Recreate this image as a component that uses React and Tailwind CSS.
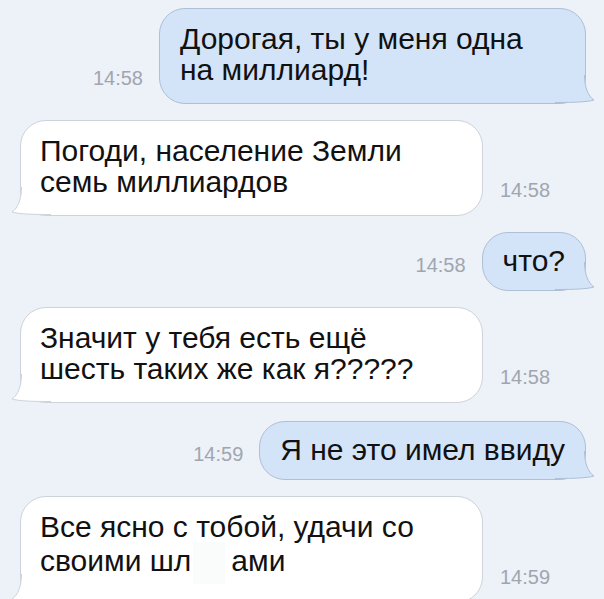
import React from 'react';

const messages = [
  { out: true, time: '14:58', width: 'w-[427px]', lines: ['Дорогая, ты у меня одна', 'на миллиард!'] },
  { out: false, time: '14:58', lines: ['Погоди, население Земли', 'семь миллиардов'] },
  { out: true, time: '14:58', lines: ['что?'] },
  { out: false, time: '14:58', lines: ['Значит у тебя есть ещё', 'шесть таких же как я?????'] },
  { out: true, time: '14:59', gap: 'mt-[2px]', lines: ['Я не это имел ввиду'] },
  { out: false, time: '14:59', lines: ['Все ясно с тобой, удачи со', 'CENSORED'] },
];

function Tail({ out }) {
  const fill = out ? '#d4e4f8' : '#ffffff';
  const stroke = out ? '#aebfd6' : '#cdd3db';
  return (
    <svg
      width="40"
      height="32"
      viewBox="0 0 40 32"
      className={
        out
          ? 'absolute bottom-0 right-[-10px] z-0'
          : 'absolute bottom-0 left-[-10px] z-0 -scale-x-100'
      }
    >
      <path d="M29.5 4 C29.5 16 33 25 39 29 C32 31 20 31.5 0 31.5 L0 4 Z" fill={fill} />
      <path d="M29.5 4 C29.5 16 33 25 39 29 C32 31 20 31.5 0 31.5" fill="none" stroke={stroke} strokeWidth="1" />
    </svg>
  );
}

function Line({ text }) {
  if (text === 'CENSORED') {
    return (
      <div className="whitespace-nowrap">
        своими шл<span className="inline-block w-[32px] h-[42px] align-middle bg-[#fafbfb] ml-[2px] mr-[6px]" />ами
      </div>
    );
  }
  return <div className="whitespace-nowrap">{text}</div>;
}

function Bubble({ msg }) {
  const single = msg.lines.length === 1;
  const pad = single ? 'pt-[12px] pb-[14px]' : 'pt-[14px] pb-[18px]';
  const time = (
    <span className="text-[20px] text-[#a0a6af] mb-[16px] leading-none font-['Liberation_Sans',Arial,sans-serif]">
      {msg.time}
    </span>
  );
  return (
    <div
      className={
        (msg.out ? 'flex items-end justify-end gap-[16px] pr-[18px] ' : 'flex items-end gap-[17px] pl-[20px] ') +
        (msg.gap || '')
      }
    >
      {msg.out && time}
      <div
        className={
          msg.out
            ? `relative rounded-[26px] border border-[#aebfd6] bg-[#d4e4f8] px-[20px] ${pad} ${msg.width || ''}`
            : `relative w-[463px] rounded-[26px] border border-[#cdd3db] bg-white px-[19px] ${pad}`
        }
      >
        <Tail out={msg.out} />
        <div className="relative z-10 text-[30px] leading-[31px] text-[#111111] font-['Liberation_Sans',Arial,sans-serif]">
          {msg.lines.map((l, i) => (
            <Line key={i} text={l} />
          ))}
        </div>
      </div>
      {!msg.out && time}
    </div>
  );
}

export default function App() {
  return (
    <div className="w-[604px] h-[599px] overflow-hidden bg-[#edf1f8] pt-[8px] flex flex-col gap-[16px]">
      {messages.map((m, i) => (
        <Bubble key={i} msg={m} />
      ))}
    </div>
  );
}
